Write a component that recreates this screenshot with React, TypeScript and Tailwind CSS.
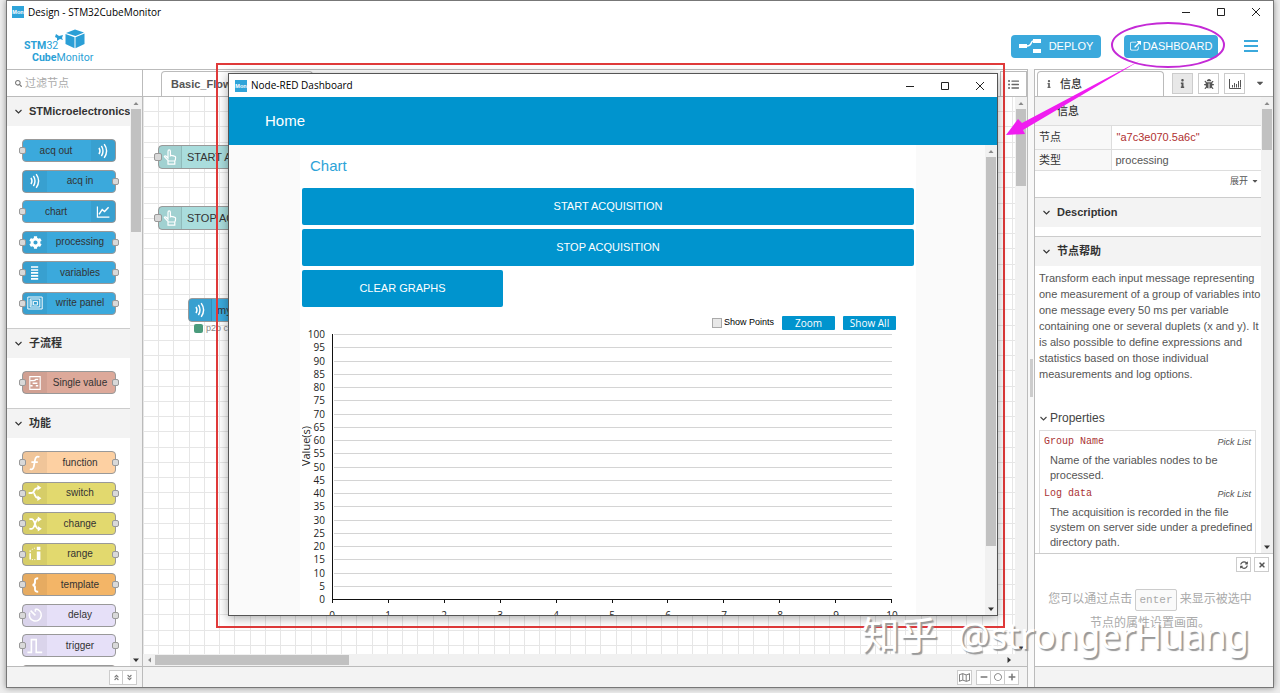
import type { ReactNode } from "react";
import {
  FaAngleDoubleDown,
  FaAngleDoubleUp,
  FaBug,
  FaCaretDown,
  FaCog,
  FaInfo,
  FaListUl,
  FaMinus,
  FaPlus,
  FaRegCircle,
  FaRegMap,
  FaSearch,
  FaSyncAlt,
  FaTimes,
} from "react-icons/fa";

const sans = "font-['Liberation_Sans','Noto_Sans_CJK_SC',sans-serif]";
const ui = "font-['Open_Sans','Noto_Sans_CJK_SC',sans-serif]";

/* ---------- icons ---------- */

function Icon({ children, className = "size-4" }: { children: ReactNode; className?: string }) {
  return (
    <svg viewBox="0 0 20 20" className={className} fill="none" stroke="currentColor" strokeWidth="1.6" aria-hidden="true">
      {children}
    </svg>
  );
}

function Chevron() {
  return (
    <svg viewBox="0 0 9 9" className="size-[9px] shrink-0" fill="none" stroke="currentColor" strokeWidth="1.1" aria-hidden="true">
      <path d="M1.500 3l3 3 3-3" />
    </svg>
  );
}

const icons: Record<string, ReactNode> = {
  wave: (
    <Icon>
      <path d="M5 6q2.500 4 0 8M8 3.500q4 6.500 0 13M11.500 1.500q6 8.500 0 17" strokeWidth="1.800" />
    </Icon>
  ),
  chart: (
    <Icon>
      <path d="M3 3v13.500h15" strokeWidth="1.500" />
      <path d="M5 13l4-6 3 2.500L17 4" strokeWidth="1.800" />
    </Icon>
  ),
  gear: <FaCog className="size-[13px]" />,
  list: (
    <Icon>
      <path d="M5 2.500h9M5 6.200h9M5 9.900h9M5 13.600h9M5 17.300h9" strokeWidth="2" />
    </Icon>
  ),
  panel: (
    <Icon>
      <path d="M1 2.500h18v15H1zM4 5h12v10H4zM8 8h5v4.500H8zM6 6.500v7" strokeWidth="1.200" />
    </Icon>
  ),
  subflow: (
    <Icon>
      <path d="M3.500 2h13v16h-13z" strokeWidth="1.400" />
      <path d="M4 7h4q2 0 3-1.500h3M4 13.500h3M11 13.500h3M7 10.300h6" strokeWidth="1.800" />
    </Icon>
  ),
  fn: (
    <Icon>
      <path d="M15.500 2.500q-4.500-2-5.500 4l-1.500 8q-1 4.500-5 3M5.500 9h8" strokeWidth="2.200" />
    </Icon>
  ),
  branch: (
    <Icon>
      <path d="M2 10h4q2 0 3-3t5-3.500M8 10q1 0 2 3t4 3.500" strokeWidth="2.200" />
      <path d="M13 0l5 3.500-5 3.500zM13 13l5 3.500-5 3.500z" fill="currentColor" stroke="none" />
    </Icon>
  ),
  shuffle: (
    <Icon>
      <path d="M3 4h3q2 0 4 6t4 6M3 16h3q2 0 4-6t4-6" strokeWidth="2.200" />
      <path d="M13.500 0.500l5 3.500-5 3.500zM13.500 12.500l5 3.500-5 3.500z" fill="currentColor" stroke="none" />
    </Icon>
  ),
  range: (
    <Icon>
      <path d="M4 9v8M4 5.500v1.800" strokeWidth="2" />
      <path d="M14.500 7v10.500M14.500 1v4" strokeWidth="4.500" />
      <path d="M6 17h5M6 4.500l5-2.500" strokeDasharray="1.500 1.500" strokeWidth="1.100" />
    </Icon>
  ),
  brace: (
    <Icon>
      <path d="M14 1.500q-4.500 0-4 4 .5 4-3 4.500 3.500 .5 3 4.500-.5 4 4 4" strokeWidth="2.400" />
    </Icon>
  ),
  timer: (
    <Icon>
      <path d="M10.500 2.500a7.500 7.500 0 1 1-7 4.500M10.500 2.500v3.500M4.500 4.500l6 6" strokeWidth="1.900" />
    </Icon>
  ),
  pulse: (
    <Icon>
      <path d="M0.500 18h5V2h6v16h7.500" strokeWidth="2" />
    </Icon>
  ),
  hand: (
    <Icon>
      <path
        d="M7.500 11.500V3q0-1.800 1.500-1.800T10.500 3v5.500q1-.8 2.200 0 1.400-.5 2.300 .5 2-.2 2 1.700 0 3-1 4.300H8L3 9.500q.8-1.500 2.300-.5zM7.500 15v4h8.500v-4"
        strokeWidth="1.500"
      />
    </Icon>
  ),
};

function WinControls() {
  return (
    <div className="ml-auto flex h-full text-[#222]">
      <button aria-label="Minimize" className="flex w-[35px] items-center justify-center">
        <svg viewBox="0 0 10 10" className="size-[10px]" stroke="currentColor"><path d="M1 5.500h8" /></svg>
      </button>
      <button aria-label="Maximize" className="flex w-[35px] items-center justify-center">
        <svg viewBox="0 0 10 10" className="size-[10px]" stroke="currentColor" fill="none"><path d="M1.500 1.500h7v7h-7z" /></svg>
      </button>
      <button aria-label="Close" className="flex w-[35px] items-center justify-center">
        <svg viewBox="0 0 10 10" className="size-[10px]" stroke="currentColor"><path d="M1 1l8 8M9 1l-8 8" /></svg>
      </button>
    </div>
  );
}

function AppIcon() {
  return (
    <svg viewBox="0 0 12 12" className="size-3 shrink-0" aria-hidden="true">
      <rect width="12" height="12" fill="#2fa4d9" />
      <text x="6" y="8" textAnchor="middle" fontSize="5.500" fontWeight="700" fill="#fff" fontFamily="Liberation Sans">Mon</text>
    </svg>
  );
}

/* ---------- scroll bars ---------- */

function VScroll({ thumb, className = "" }: { thumb: string; className?: string }) {
  return (
    <div className={`flex w-3 shrink-0 flex-col items-center bg-[#f1f1f1] ${className}`}>
      <svg viewBox="0 0 12 12" className="size-3 shrink-0"><path d="M3.500 8h5L6 5z" fill="#8a8a8a" /></svg>
      <div className={`w-[10px] shrink-0 bg-[#c1c1c1] ${thumb}`} />
      <svg viewBox="0 0 12 12" className="mt-auto size-3 shrink-0"><path d="M3 4.500h6L6 8z" fill="#333" /></svg>
    </div>
  );
}

/* ---------- flow nodes ---------- */

function Port({ side }: { side: "left" | "right" }) {
  return (
    <span
      className={`absolute top-[7px] size-[7px] rounded-[2px] border border-[#999] bg-[#d9d9d9] ${side === "left" ? "-left-1" : "-right-1"}`}
    />
  );
}

type NodeDef = {
  label: string;
  icon: string;
  color: string;
  iconRight?: boolean;
  input?: boolean;
  output?: boolean;
};

function PaletteNode({ label, icon, color, iconRight, input = true, output = true }: NodeDef) {
  return (
    <li
      className={`relative flex h-[23px] w-[94px] shrink-0 items-stretch rounded-[4px] border border-[#999] text-[10px] text-[#333] ${color} ${iconRight ? "flex-row-reverse" : ""}`}
    >
      <span className="flex w-6 items-center justify-center bg-black/5 text-white">{icons[icon]}</span>
      <span className="flex flex-1 items-center justify-center pr-[2px] pb-px whitespace-nowrap">{label}</span>
      {input && <Port side="left" />}
      {output && <Port side="right" />}
    </li>
  );
}

const stNodes: NodeDef[] = [
  { label: "acq out", icon: "wave", color: "bg-[#3ba9dc]", iconRight: true, output: false },
  { label: "acq in", icon: "wave", color: "bg-[#3ba9dc]", input: false },
  { label: "chart", icon: "chart", color: "bg-[#3ba9dc]", iconRight: true, output: false },
  { label: "processing", icon: "gear", color: "bg-[#3ba9dc]" },
  { label: "variables", icon: "list", color: "bg-[#3ba9dc]" },
  { label: "write panel", icon: "panel", color: "bg-[#3ba9dc]" },
];

const fnNodes: NodeDef[] = [
  { label: "function", icon: "fn", color: "bg-[#fdd0a2]" },
  { label: "switch", icon: "branch", color: "bg-[#e2d96e]" },
  { label: "change", icon: "shuffle", color: "bg-[#e2d96e]" },
  { label: "range", icon: "range", color: "bg-[#e2d96e]" },
  { label: "template", icon: "brace", color: "bg-[#f3b567]" },
  { label: "delay", icon: "timer", color: "bg-[#e6e0f8]" },
  { label: "trigger", icon: "pulse", color: "bg-[#e6e0f8]" },
];

function Category({ title, children, body }: { title: string; children: ReactNode; body: string }) {
  return (
    <section className="shrink-0 border-b border-[#ccc]">
      <button className="flex h-[29px] w-full items-center gap-[6px] bg-[#f3f3f3] pl-[7px] text-left text-[11px] font-bold whitespace-nowrap text-[#333]">
        <Chevron />
        {title}
      </button>
      <div className={`bg-white px-[15px] ${body}`}>{children}</div>
    </section>
  );
}

function Palette() {
  return (
    <aside className="flex w-[136px] shrink-0 flex-col border-r border-[#bbb]">
      <label className="flex h-7 shrink-0 items-center gap-[3px] border-t border-b border-[#bbb] pl-2 text-[#777]">
        <FaSearch className="size-[7px] shrink-0" />
        <input aria-label="过滤节点" placeholder="过滤节点" className="w-full min-w-0 text-[11px] outline-none placeholder:text-[#aaa]" />
      </label>
      <div className="flex min-h-0 flex-1">
        <div className="flex min-w-0 flex-1 flex-col overflow-hidden">
          <Category title="STMicroelectronics" body="py-[13px]">
            <ul className="flex h-[176px] flex-col justify-between">
              {stNodes.map((n) => <PaletteNode key={n.label} {...n} />)}
            </ul>
          </Category>
          <Category title="子流程" body="pt-[13px] pb-[14px]">
            <ul>
              <PaletteNode label="Single value" icon="subflow" color="bg-[#dda99a]" />
            </ul>
          </Category>
          <Category title="功能" body="pt-[13px]">
            <ul className="flex h-[237px] flex-col justify-between">
              {fnNodes.map((n) => <PaletteNode key={n.label} {...n} />)}
              <li className="h-[23px] w-[94px] rounded-[4px] border border-[#999] bg-[#c98a78]" />
            </ul>
          </Category>
        </div>
        <VScroll thumb="h-[123px]" />
      </div>
      <div className="flex h-[21px] shrink-0 items-center justify-end border-t border-[#bbb] bg-[#f3f3f3] pr-[5px] text-[#777]">
        <button aria-label="Collapse all" className="flex h-[15px] w-[14px] items-center justify-center border border-[#ccc] bg-white"><FaAngleDoubleUp className="size-[7px]" /></button>
        <button aria-label="Expand all" className="flex h-[15px] w-[14px] items-center justify-center border border-l-0 border-[#ccc] bg-white"><FaAngleDoubleDown className="size-[7px]" /></button>
      </div>
    </aside>
  );
}

/* ---------- workspace ---------- */

function CanvasNode({ label, icon, className }: { label: string; icon: string; className: string }) {
  return (
    <div className={`absolute flex h-6 w-[150px] items-stretch rounded-[4px] border border-[#999] text-[11px] text-[#333] ${className}`}>
      <span className="flex w-[23px] items-center justify-center border-r border-black/10 bg-black/5 text-white">{icons[icon]}</span>
      <span className="flex items-center pl-[5px] whitespace-nowrap">{label}</span>
    </div>
  );
}

function Workspace() {
  return (
    <main className="flex min-w-0 flex-1 flex-col border-r border-[#bbb]">
      <div className="flex h-7 shrink-0 items-end border-t border-b border-[#bbb] pl-[18px]">
        <button className="h-[25px] w-[152px] rounded-t-[4px] border border-b-0 border-[#bbb] pl-[9px] text-left text-[11px] font-bold text-[#555]">Basic_Flow</button>
        <button aria-label="List flows" className="ml-auto flex h-[25px] w-[27px] items-center justify-center border border-b-0 border-[#bbb] text-[#666]"><FaListUl className="size-[11px]" /></button>
      </div>
      <div className="flex min-h-0 flex-1">
        <div className="relative min-w-0 flex-1 overflow-hidden bg-white">
          <svg className="size-full" aria-hidden="true">
            <defs>
              <pattern id="grid" width="61" height="61" patternUnits="userSpaceOnUse" y="-1">
                <path d="M0.500 0v61M15.500 0v61M30.500 0v61M46.500 0v61M0 0.500h61M0 15.500h61M0 30.500h61M0 46.500h61" stroke="#e6e6e6" />
              </pattern>
            </defs>
            <rect width="100%" height="100%" fill="url(#grid)" />
          </svg>
          <CanvasNode label="START ACQ" icon="hand" className="top-[48px] left-[15px] bg-[#aadddd]" />
          <CanvasNode label="STOP ACQ" icon="hand" className="top-[109px] left-[15px] bg-[#aadddd]" />
          <CanvasNode label="myVar" icon="wave" className="top-[201px] left-[45px] bg-[#3ba9dc]" />
          <span className="absolute top-[56px] left-[11px] size-[8px] rounded-[2px] border border-[#999] bg-[#d9d9d9]" />
          <span className="absolute top-[117px] left-[11px] size-[8px] rounded-[2px] border border-[#999] bg-[#d9d9d9]" />
          <div className="absolute top-[225px] left-[51px] flex items-center gap-[3px] text-[9px] leading-3 text-[#888]">
            <span className="size-[9px] rounded-[2px] bg-[#4a9b7c]" />
            p2p c
          </div>
        </div>
        <VScroll thumb="h-[77px]" />
      </div>
      <div className="flex h-3 shrink-0 items-center bg-[#f1f1f1]">
        <svg viewBox="0 0 12 12" className="size-3"><path d="M8 3.500v5L5 6z" fill="#8a8a8a" /></svg>
        <div className="h-[10px] w-[194px] bg-[#c1c1c1]" />
        <svg viewBox="0 0 12 12" className="mr-3 ml-auto size-3"><path d="M4.500 3v6L8 6z" fill="#333" /></svg>
      </div>
      <div className="flex h-[21px] shrink-0 items-center justify-end gap-1 border-t border-[#bbb] bg-[#f3f3f3] pr-2 text-[#777]">
        <button aria-label="Map" className="flex h-[15px] w-[15px] items-center justify-center border border-[#ccc] bg-white"><FaRegMap className="size-[11px]" /></button>
        <div className="flex">
          <button aria-label="Zoom out" className="flex h-[15px] w-[15px] items-center justify-center border border-[#ccc] bg-white"><FaMinus className="size-[8px]" /></button>
          <button aria-label="Reset zoom" className="flex h-[15px] w-[13px] items-center justify-center border-y border-[#ccc] bg-white"><FaRegCircle className="size-[8px]" /></button>
          <button aria-label="Zoom in" className="flex h-[15px] w-[15px] items-center justify-center border border-[#ccc] bg-white"><FaPlus className="size-[8px]" /></button>
        </div>
      </div>
    </main>
  );
}

/* ---------- information sidebar ---------- */

function SideHeader({ title }: { title: string }) {
  return (
    <button className="flex h-[30px] w-full shrink-0 items-center gap-[6px] border-t border-[#ccc] bg-[#f3f3f3] pl-[7px] text-left text-[11px] font-bold text-[#333]">
      <Chevron />
      {title}
    </button>
  );
}

function Sidebar() {
  const tabBtn = "flex h-[21px] w-[21px] items-center justify-center border border-[#ccc] text-[#555]";
  return (
    <aside className="flex w-[239px] shrink-0 flex-col border-l border-[#bbb] text-[#555]">
      <div className="flex h-7 shrink-0 items-end border-t border-b border-[#bbb] pl-[2px]">
        <button className="flex h-[25px] w-[127px] items-center gap-[7px] rounded-t-[4px] border border-b-0 border-[#bbb] bg-white pl-[7px] text-[11px] font-medium text-[#333]">
          <FaInfo className="size-[8px] text-[#666]" />
          信息
        </button>
        <div className="mb-[2px] ml-2 flex gap-[5px]">
          <button aria-label="Info" className={`${tabBtn} bg-[#e8e8e8]`}><FaInfo className="size-[9px]" /></button>
          <button aria-label="Debug" className={tabBtn}><FaBug className="size-[10px]" /></button>
          <button aria-label="Chart" className={tabBtn}>
            <svg viewBox="0 0 14 12" className="h-3 w-[14px]" stroke="currentColor" fill="none"><path d="M1.500 1v9.500H13M4.500 7v2.500M6.500 5v4.500M8.500 6v3.500M10.500 3v6.500M12.500 2v7.500" /></svg>
          </button>
        </div>
        <button aria-label="More" className="mb-2 ml-[10px]"><FaCaretDown className="size-[10px]" /></button>
      </div>
      <div className="flex min-h-0 flex-1">
        <div className="flex min-w-0 flex-1 flex-col overflow-hidden">
          <h2 className="flex h-7 shrink-0 items-center bg-[#f3f3f3] pl-[22px] text-[11px] font-medium text-[#333]">信息</h2>
          <table className="w-full shrink-0 border-collapse text-left text-[11px]">
            <tbody>
              <tr className="h-6 border-y border-[#ddd]">
                <th className="w-[76px] border-r border-[#ddd] bg-[#f8f8f8] pl-1 font-normal text-[#333]">节点</th>
                <td className="pl-[5px] text-[#b03030]">"a7c3e070.5a6c"</td>
              </tr>
              <tr className="h-[21px] border-b border-[#ddd]">
                <th className="border-r border-[#ddd] bg-[#f8f8f8] pl-1 font-normal text-[#333]">类型</th>
                <td className="pl-1">processing</td>
              </tr>
            </tbody>
          </table>
          <div className="flex h-[26px] shrink-0 items-start justify-end pt-[2px]">
            <button className="flex items-center gap-[3px] pr-[2px] text-[9px] leading-4">展开 <FaCaretDown className="size-[8px]" /></button>
          </div>
          <SideHeader title="Description" />
          <div className="h-[9px] shrink-0" />
          <SideHeader title="节点帮助" />
          <div className="shrink-0 pt-1 pl-1 text-[11px] leading-4">
            <p>
              Transform each input message representing one measurement of a group of variables into one message every 50 ms per variable containing one or several duplets (x and y). It is also possible to define expressions and statistics based on those individual measurements and log options.
            </p>
            <h3 className="mt-7 flex items-center gap-[2px] text-[12px] leading-4 text-[#444]"><Chevron />Properties</h3>
            <dl className="mt-1 mr-[5px] border border-[#ddd] pb-4 pl-1">
              <div className="flex h-[22px] items-center justify-between pr-1">
                <dt className="font-['Liberation_Mono',monospace] text-[10px] text-[#a33]">Group Name</dt>
                <dd className="text-[9px] italic">Pick List</dd>
              </div>
              <dd className="pl-[6px] leading-[15px]">Name of the variables nodes to be processed.</dd>
              <div className="flex h-[22px] items-center justify-between pr-1">
                <dt className="font-['Liberation_Mono',monospace] text-[10px] text-[#a33]">Log data</dt>
                <dd className="text-[9px] italic">Pick List</dd>
              </div>
              <dd className="pl-[6px] leading-[15px]">The acquisition is recorded in the file system on server side under a predefined directory path.</dd>
            </dl>
          </div>
        </div>
        <VScroll thumb="h-[41px]" />
      </div>
      <div className="h-[113px] shrink-0 border-t border-[#ccc]">
        <div className="flex justify-end gap-[3px] pt-[3px] pr-1">
          <button aria-label="Refresh" className="flex size-[15px] items-center justify-center border border-[#ccc]"><FaSyncAlt className="size-2" /></button>
          <button aria-label="Close tips" className="flex size-[15px] items-center justify-center border border-[#ccc]"><FaTimes className="size-2" /></button>
        </div>
        <p className="pt-4 pr-4 pl-2 text-center text-[12px] leading-[23px] text-[#aaa]">
          您可以通过点击 <kbd className="rounded-[2px] border border-[#ccc] bg-[#fafafa] px-[3px] py-1 font-['Liberation_Mono',monospace] text-[11px]">enter</kbd> 来显示被选中节点的属性设置画面。
        </p>
      </div>
      <div className="h-[21px] shrink-0 border-t border-[#bbb] bg-[#f3f3f3]" />
    </aside>
  );
}

/* ---------- dashboard window ---------- */

function ValueChart() {
  const rows = Array.from({ length: 21 }, (_, i) => 100 - i * 5);
  const cols = Array.from({ length: 11 }, (_, i) => i);
  return (
    <svg viewBox="0 0 612 290" className="h-[290px] w-[612px] shrink-0 font-['Open_Sans',sans-serif]" fontSize="10" fill="#222">
      {rows.map((v, i) => {
        const y = 4 + Math.round(i * 13.25);
        return (
          <g key={v}>
            {v > 0 && <path d={`M32 ${y + 0.5}H590`} stroke="#d4d4d4" />}
            <text x="23" y={y + 4} textAnchor="end">{v}</text>
          </g>
        );
      })}
      <path d="M30.500 4v266M30 269.500h560" stroke="#111" />
      {cols.map((c) => (
        <g key={c}>
          <path d={`M${Math.round(c * 55.9) + 30.5} 270v3`} stroke="#111" />
          <text x={30 + c * 56} y="289" textAnchor="middle">{c}</text>
        </g>
      ))}
      <text transform="translate(8 116) rotate(-90)" textAnchor="middle" fontSize="11">Value(s)</text>
    </svg>
  );
}

function DashboardWindow() {
  const btn = "flex h-[37px] items-center justify-center rounded-[2px] bg-[#0094ce] text-[11px] text-white";
  const small = "h-[14px] w-[53px] rounded-[1px] bg-[#0094ce] text-center text-[10px] leading-[14px] font-medium text-white";
  return (
    <section className="flex min-w-0 flex-1 flex-col border border-[#555] bg-white shadow-[0_2px_10px_rgba(0,0,0,0.35)]">
      <header className={`flex h-[23px] shrink-0 items-center gap-1 pl-[6px] text-[10px] text-black ${ui}`}>
        <AppIcon />
        Node-RED Dashboard
        <WinControls />
      </header>
      <div className="flex h-12 shrink-0 items-center bg-[#0094ce] pl-9 text-[15px] text-white">Home</div>
      <div className="flex min-h-0 flex-1 bg-[#fafafa]">
        <div className="flex min-w-0 flex-1 justify-center overflow-hidden pl-[2px]">
          <div className="flex w-[616px] flex-col gap-1 bg-white px-[2px] pt-px">
            <h1 className="flex h-[38px] shrink-0 items-center pt-[2px] pl-2 text-[15px] text-[#2da3d8]">Chart</h1>
            <button className={`${btn} shrink-0`}>START ACQUISITION</button>
            <button className={`${btn} shrink-0`}>STOP ACQUISITION</button>
            <button className={`${btn} w-[201px] shrink-0`}>CLEAR GRAPHS</button>
            <div className={`mt-[5px] flex h-[14px] shrink-0 items-center justify-end gap-2 pr-[18px] ${ui}`}>
              <label className="flex items-center gap-[2px] font-['Liberation_Sans',sans-serif] text-[9px] text-black">
                <input type="checkbox" className="size-[10px] appearance-none border border-[#aaa] bg-[#e8e8e8]" />
                Show Points
              </label>
              <button className={small}>Zoom</button>
              <button className={small}>Show All</button>
            </div>
            <div className="-mt-1 overflow-hidden">
              <ValueChart />
            </div>
          </div>
        </div>
        <VScroll thumb="h-[389px]" />
      </div>
    </section>
  );
}

/* ---------- page ---------- */

function Logo() {
  return (
    <svg viewBox="0 0 74 36" className="h-9 w-[74px]" role="img" aria-label="STM32CubeMonitor" fill="#2b9fd6" fontFamily="'Liberation Sans Narrow','Roboto',sans-serif" fontSize="10.600">
      <text x="0" y="21"><tspan fontWeight="700">STM</tspan>32</text>
      <text x="8" y="33"><tspan fontWeight="700">Cube</tspan>Monitor</text>
      <path d="M51 1.500l9 3-8.500 3.500L42 5zM41.500 6l9 3.200v11L41.500 16zM60.500 5.500L51.500 9.200v11L60.500 16z" />
      <path d="M32 6l3 2 4-1-1 3 1 2-3-1-3 2v-3l-2-1z" />
    </svg>
  );
}

export default function App() {
  return (
    <div className={`h-screen overflow-hidden bg-[#ededed] px-[6px] pb-[5px] leading-normal ${sans}`}>
      <div className="relative flex h-full flex-col border border-[#777] bg-white shadow-[0_0_6px_rgba(0,0,0,0.4)]">
        <header className={`flex h-[22px] shrink-0 items-center gap-1 pl-[5px] text-[10px] text-black ${ui}`}>
          <AppIcon />
          Design - STM32CubeMonitor
          <WinControls />
        </header>
        <div className="flex h-[46px] shrink-0 items-center pr-[15px] pl-[17px]">
          <Logo />
          <button className="mr-[23px] ml-auto flex h-[23px] w-[90px] items-center justify-center gap-2 rounded-[4px] bg-[#3ba9dc] text-[11px] text-white">
            <svg viewBox="0 0 22 14" className="h-[14px] w-[22px]" fill="currentColor" aria-hidden="true">
              <path d="M0 5h8v4H0zM14 0h8v4h-8zM14 10h8v4h-8z" />
              <path d="M8 7q3 0 4-2.500T14 2" fill="none" stroke="currentColor" strokeWidth="1.500" />
            </svg>
            DEPLOY
          </button>
          <button className="mr-[26px] flex h-[23px] w-[94px] items-center justify-center gap-[2px] rounded-[4px] bg-[#3ba9dc] text-[11px] text-white">
            <svg viewBox="0 0 1792 1792" className="size-[11px]" fill="currentColor" aria-hidden="true">
              <path d="M1408 928v320q0 119-84.500 203.500t-203.500 84.500h-832q-119 0-203.500-84.500t-84.500-203.500v-832q0-119 84.500-203.500t203.500-84.500h704q14 0 23 9t9 23v64q0 14-9 23t-23 9h-704q-66 0-113 47t-47 113v832q0 66 47 113t113 47h832q66 0 113-47t47-113v-320q0-14 9-23t23-9h64q14 0 23 9t9 23zm384-864v512q0 26-19 45t-45 19-45-19l-176-176-652 652q-10 10-23 10t-23-10l-114-114q-10-10-10-23t10-23l652-652-176-176q-19-19-19-45t19-45 45-19h512q26 0 45 19t19 45z" />
            </svg>
            DASHBOARD
          </button>
          <button aria-label="Menu" className="flex w-[14px] flex-col gap-[3px]">
            <span className="h-[2px] w-full bg-[#3ba9dc]" />
            <span className="h-[2px] w-full bg-[#3ba9dc]" />
            <span className="h-[2px] w-full bg-[#3ba9dc]" />
          </button>
        </div>
        <div className="flex min-h-0 flex-1">
          <Palette />
          <Workspace />
          <div className="flex w-[6px] shrink-0 items-center justify-center bg-[#f8f8f8]">
            <span className="h-[38px] w-[3px] bg-[#ccc]" />
          </div>
          <Sidebar />
        </div>

        <div className="absolute top-[62px] right-[268px] bottom-[59px] left-[209px] flex border-2 border-[#e03a3a] pt-2 pr-[5px] pb-[10px] pl-[10px]">
          <DashboardWindow />
        </div>

        <svg viewBox="0 0 224 120" className="pointer-events-none absolute top-[19px] right-[44px] h-[120px] w-[224px]" aria-hidden="true">
          <ellipse cx="163" cy="25" rx="56" ry="22" fill="none" stroke="#c42ad6" strokeWidth="2" />
          <path d="M136 40L17 103l-4-4L1 115l19-1-2-4z" fill="#f01df0" />
        </svg>

        <p className="pointer-events-none absolute right-[24px] bottom-[24px] flex items-baseline gap-5 font-['Noto_Sans','Noto_Sans_CJK_SC',sans-serif] text-[36px] leading-[54px] whitespace-nowrap text-white [text-shadow:2px_2px_1px_#999]">
          <span className="text-[38px]">知乎</span>
          <span>@strongerHuang</span>
        </p>
      </div>
    </div>
  );
}
